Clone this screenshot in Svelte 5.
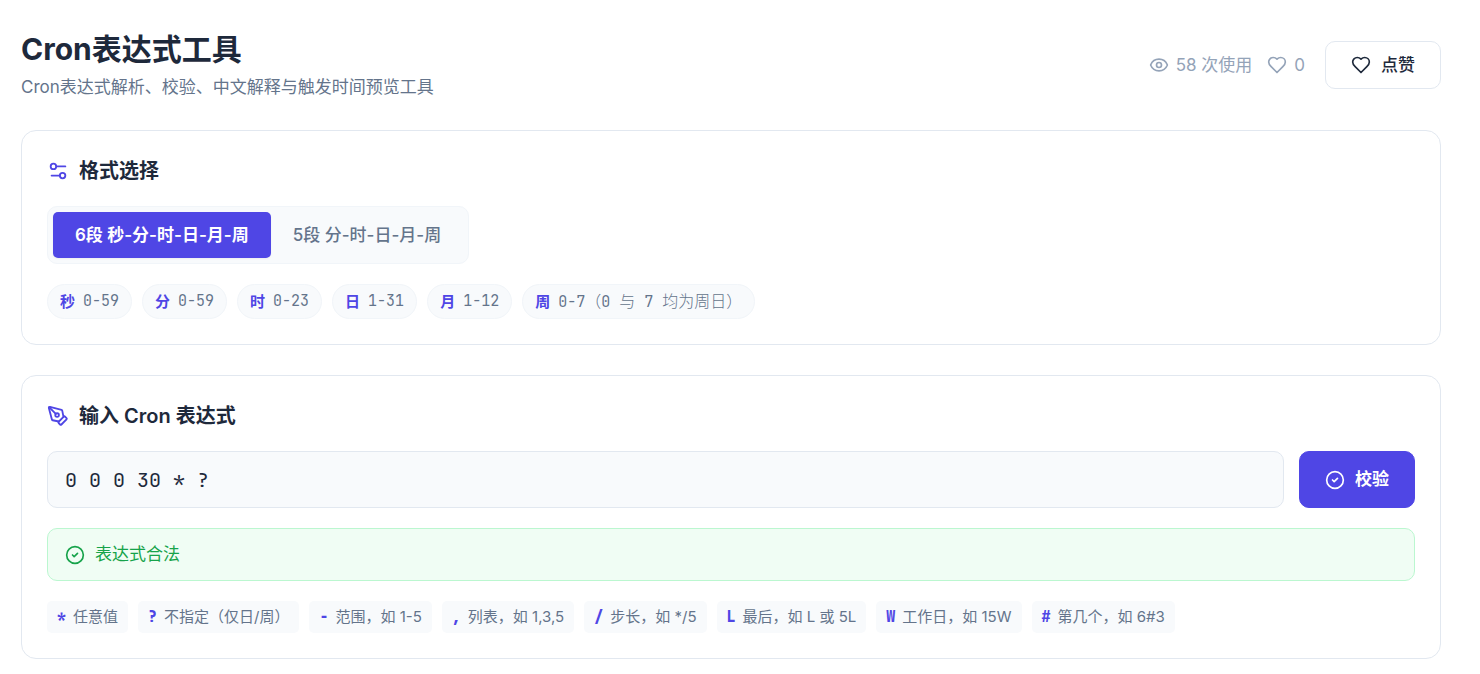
<script>
    let liked = $state(false);
    let usage = $state(58);
    let likes = $derived(liked ? 1 : 0);
    let format = $state(6);
    let expression = $state("0 0 0 30 * ?");
    let valid = $state(true);

    const formats = [
        { segments: 6, label: "6段 秒-分-时-日-月-周" },
        { segments: 5, label: "5段 分-时-日-月-周" },
    ];

    const fields = [
        { name: "秒", range: "0-59" },
        { name: "分", range: "0-59" },
        { name: "时", range: "0-23" },
        { name: "日", range: "1-31" },
        { name: "月", range: "1-12" },
        { name: "周", range: "0-7（0 与 7 均为周日）" },
    ];

    const symbols = [
        { code: "*", text: "任意值" },
        { code: "?", text: "不指定（仅日/周）" },
        { code: "-", text: "范围，如 1-5" },
        { code: ",", text: "列表，如 1,3,5" },
        { code: "/", text: "步长，如 */5" },
        { code: "L", text: "最后，如 L 或 5L" },
        { code: "W", text: "工作日，如 15W" },
        { code: "#", text: "第几个，如 6#3" },
    ];

    let visibleFields = $derived(format === 6 ? fields : fields.slice(1));

    // Split a range into Latin and Chinese runs so each gets its own size
    function runs(range) {
        return range.match(/[\x20-\x7e]+|[^\x20-\x7e]+/g);
    }

    function validate() {
        valid = expression.trim().split(/\s+/).length === format;
        usage += 1;
    }
</script>

{#snippet heartIcon()}
    <svg class="icon" viewBox="0 0 24 24" aria-hidden="true">
        <path
            d="M19 14c1.49-1.46 3-3.21 3-5.5A5.5 5.5 0 0 0 16.5 3c-1.76 0-3 .5-4.5 2-1.5-1.5-2.74-2-4.5-2A5.5 5.5 0 0 0 2 8.5c0 2.3 1.5 4.05 3 5.5l7 7Z"
        />
    </svg>
{/snippet}

{#snippet checkIcon()}
    <svg class="icon" viewBox="0 0 24 24" aria-hidden="true">
        <circle cx="12" cy="12" r="10" />
        <path d="m9 12 2 2 4-4" />
    </svg>
{/snippet}

<main class="page">
    <header class="header">
        <div>
            <h1>Cron表达式工具</h1>
            <p class="subtitle">Cron表达式解析、校验、中文解释与触发时间预览工具</p>
        </div>
        <div class="header-side">
            <div class="stats">
                <span class="stat">
                    <svg class="icon" viewBox="0 0 24 24" aria-hidden="true">
                        <path
                            d="M2.062 12.348a1 1 0 0 1 0-.696 10.75 10.75 0 0 1 19.876 0 1 1 0 0 1 0 .696 10.75 10.75 0 0 1-19.876 0"
                        />
                        <circle cx="12" cy="12" r="3" />
                    </svg>
                    <span>{usage} 次使用</span>
                </span>
                <span class="stat">
                    {@render heartIcon()}
                    <span>{likes}</span>
                </span>
            </div>
            <button class="btn btn-outline" type="button" onclick={() => (liked = !liked)}>
                {@render heartIcon()}
                点赞
            </button>
        </div>
    </header>

    <section class="card">
        <h2>
            <svg class="icon icon-lg" viewBox="0 0 24 24" aria-hidden="true">
                <path d="M20 7h-9" />
                <path d="M14 17H5" />
                <circle cx="17" cy="17" r="3" />
                <circle cx="7" cy="7" r="3" />
            </svg>
            格式选择
        </h2>
        <div class="tabs">
            {#each formats as item (item.segments)}
                <button
                    class="tab"
                    class:active={format === item.segments}
                    type="button"
                    aria-pressed={format === item.segments}
                    onclick={() => (format = item.segments)}
                >
                    {item.label}
                </button>
            {/each}
        </div>
        <div class="fields">
            {#each visibleFields as field (field.name)}
                <span class="field">
                    <strong>{field.name}</strong>
                    <span class="range">
                        {#each runs(field.range) as run}<span class:wide={run > "~"}>{run}</span>{/each}
                    </span>
                </span>
            {/each}
        </div>
    </section>

    <section class="card">
        <h2>
            <svg class="icon icon-lg" viewBox="0 0 24 24" aria-hidden="true">
                <path
                    d="M15.707 21.293a1 1 0 0 1-1.414 0l-1.586-1.586a1 1 0 0 1 0-1.414l5.586-5.586a1 1 0 0 1 1.414 0l1.586 1.586a1 1 0 0 1 0 1.414z"
                />
                <path
                    d="m18 13-1.375-6.874a1 1 0 0 0-.746-.776L3.235 2.028a1 1 0 0 0-1.207 1.207L5.35 15.879a1 1 0 0 0 .776.746L13 18"
                />
                <path d="m2.3 2.3 7.286 7.286" />
                <circle cx="11" cy="11" r="2" />
            </svg>
            <label for="expression">输入 Cron 表达式</label>
        </h2>
        <div class="input-row">
            <input id="expression" type="text" spellcheck="false" bind:value={expression} />
            <button class="btn btn-primary" type="button" onclick={validate}>
                {@render checkIcon()}
                校验
            </button>
        </div>
        <div class="result" class:invalid={!valid} role="status">
            {@render checkIcon()}
            <span>{valid ? "表达式合法" : "表达式不合法"}</span>
        </div>
        <div class="symbols">
            {#each symbols as symbol (symbol.code)}
                <span class="symbol"><code>{symbol.code}</code>{symbol.text}</span>
            {/each}
        </div>
    </section>
</main>

<style>
    :global(body) {
        margin: 0;
        background: #fff;
    }

    .page {
        --primary: #4f46e5;
        --text: #1e293b;
        --muted: #64748b;
        --border: #e2e8f0;
        --soft: #f8fafc;
        --sans: Inter, "Noto Sans CJK SC", sans-serif;
        --mono: "JetBrains Mono", "Liberation Mono", "Noto Sans CJK SC", monospace;
        display: flex;
        flex-direction: column;
        gap: 30px;
        padding: 30px 39px 15px 21px;
        font-family: var(--sans);
        font-size: 17px;
        line-height: 25px;
        color: var(--text);
    }

    h1,
    h2,
    p {
        margin: 0;
    }

    button,
    input {
        box-sizing: border-box;
        font: inherit;
        color: inherit;
    }

    button {
        cursor: pointer;
    }

    .icon {
        width: 20px;
        height: 20px;
        flex-shrink: 0;
        fill: none;
        stroke: currentColor;
        stroke-width: 2;
        stroke-linecap: round;
        stroke-linejoin: round;
    }

    .icon-lg {
        width: 22px;
        height: 22px;
        color: var(--primary);
    }

    .header {
        display: flex;
        align-items: center;
        justify-content: space-between;
    }

    h1 {
        font-size: 30px;
        font-weight: 700;
        line-height: 38px;
    }

    .subtitle {
        margin-top: 7px;
        color: var(--muted);
    }

    .header-side {
        display: flex;
        align-items: center;
        gap: 20px;
    }

    .stats {
        display: flex;
        gap: 15px;
        color: #94a3b8;
    }

    .stat {
        display: flex;
        align-items: center;
        gap: 7px;
    }

    .btn {
        display: flex;
        align-items: center;
        justify-content: center;
        gap: 10px;
        min-height: 48px;
        padding: 0 25px;
        border: 1px solid var(--border);
        border-radius: 10px;
        font-weight: 500;
    }

    .btn-outline {
        background: #fff;
    }

    .btn-primary {
        background: var(--primary);
        border-color: var(--primary);
        font-weight: 600;
        color: #fff;
    }

    .card {
        display: flex;
        flex-direction: column;
        gap: 20px;
        padding: 25px;
        border: 1px solid var(--border);
        border-radius: 15px;
        background: #fff;
    }

    h2 {
        display: flex;
        align-items: center;
        gap: 10px;
        font-size: 20px;
        font-weight: 600;
        line-height: 30px;
    }

    .tabs {
        display: flex;
        align-self: flex-start;
        padding: 5px;
        border: 1px solid #f1f5f9;
        border-radius: 10px;
        background: var(--soft);
    }

    .tab {
        height: 46px;
        padding: 0 22px;
        border: 0;
        border-radius: 5px;
        background: none;
        font-weight: 500;
        color: var(--muted);
    }

    .tab.active {
        background: var(--primary);
        font-weight: 600;
        color: #fff;
        box-shadow: 0 1px 2px rgba(0, 0, 0, 0.05);
    }

    .fields,
    .symbols {
        display: flex;
        flex-wrap: wrap;
        gap: 10px;
    }

    .field {
        display: flex;
        align-items: center;
        gap: 8px;
        height: 33px;
        padding: 0 12px;
        border: 1px solid #f1f5f9;
        border-radius: 20px;
        background: var(--soft);
        font-size: 15px;
        color: var(--muted);
    }

    .field strong {
        font-weight: 700;
        color: var(--primary);
    }

    .range {
        font-family: var(--mono);
    }

    .wide {
        font-size: 16px;
        font-weight: 300;
    }

    .input-row {
        display: flex;
        gap: 15px;
    }

    input {
        flex: 1;
        min-width: 0;
        height: 57px;
        padding: 0 17px;
        border: 1px solid var(--border);
        border-radius: 10px;
        background: var(--soft);
        font-family: var(--mono);
        font-size: 20px;
    }

    .result {
        display: flex;
        align-items: center;
        gap: 10px;
        padding: 13px 17px;
        border: 1px solid #bbf7d0;
        border-radius: 10px;
        background: #f0fdf4;
        color: #16a34a;
    }

    .result.invalid {
        border-color: #fecaca;
        background: #fef2f2;
        color: #dc2626;
    }

    .symbol {
        display: flex;
        align-items: center;
        gap: 7px;
        height: 32px;
        padding: 0 10px;
        border-radius: 5px;
        background: var(--soft);
        font-size: 15px;
        line-height: 22px;
        color: var(--muted);
    }

    code {
        font-family: var(--mono);
        font-weight: 800;
        color: var(--primary);
    }
</style>
